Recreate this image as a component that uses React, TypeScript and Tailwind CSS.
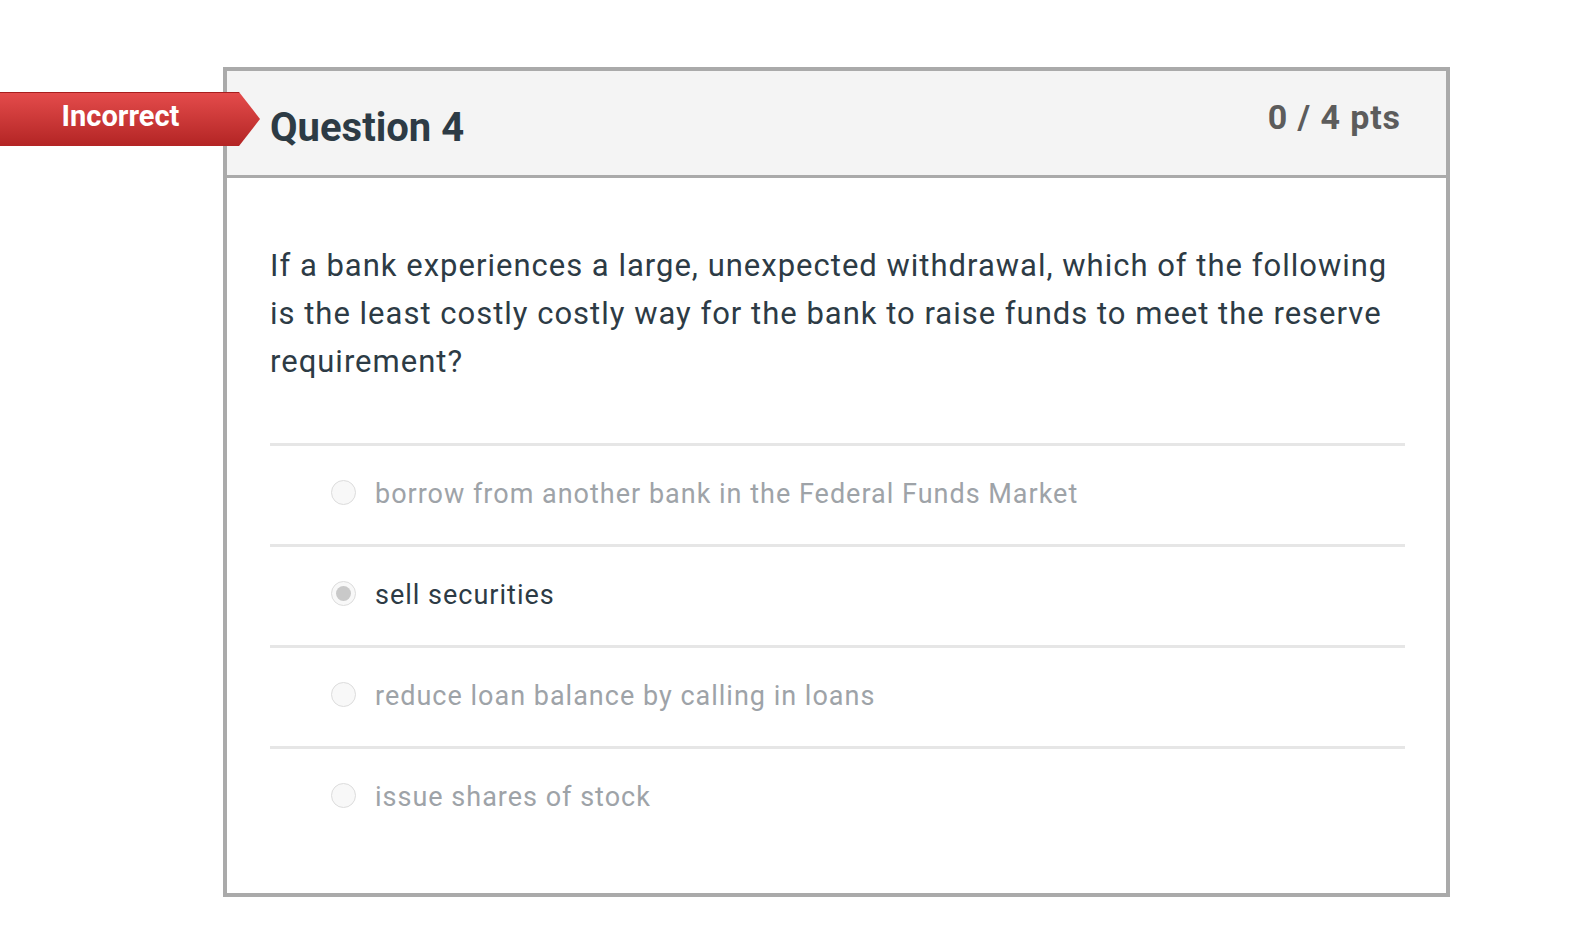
import React from 'react';

type Answer = { text: string; selected?: boolean };

const answers: Answer[] = [
  { text: 'borrow from another bank in the Federal Funds Market' },
  { text: 'sell securities', selected: true },
  { text: 'reduce loan balance by calling in loans' },
  { text: 'issue shares of stock' },
];

const Radio: React.FC<{ checked?: boolean }> = ({ checked }) => (
  <span className="flex-shrink-0 mb-[6px] w-[25px] h-[25px] rounded-full border border-[#dcdcdc] bg-[#f8f8f8] flex items-center justify-center">
    {checked && <span className="w-[15px] h-[15px] rounded-full bg-[#c9c9c9]" />}
  </span>
);

export default function App() {
  return (
    <div className="min-h-screen bg-white relative font-['Roboto','Liberation_Sans',sans-serif]">
      {/* incorrect ribbon */}
      <div className="absolute left-0 top-[92px] w-[260px] h-[54px] z-10 bg-gradient-to-b from-[#e44b4b] to-[#b32424] border-t border-[#a81e1e] [clip-path:polygon(0_0,239px_0,260px_50%,239px_100%,0_100%)]">
        <div className="w-[239px] h-full flex items-center justify-center pb-[7px] pl-[2px] text-white font-bold text-[29px] leading-none">
          Incorrect
        </div>
      </div>

      <div className="pt-[67px] pl-[223px]">
        <div className="w-[1227px] h-[830px] border-4 border-[#aaaaaa] flex flex-col">
          <div className="h-[107px] flex-shrink-0 bg-[#f4f4f4] border-b-[3px] border-[#aaaaaa] flex items-start justify-between px-[43px]">
            <h2 className="pt-[33px] text-[40px] leading-[48px] font-bold text-[#2d3b45]">Question 4</h2>
            <div className="pt-[26px] mr-[2px] text-[34px] leading-[40px] font-bold tracking-[0.9px] text-[#5c5c5c]">
              0 / 4 pts
            </div>
          </div>

          <div className="px-[43px] pt-[64px]">
            <p className="text-[31px] leading-[48px] tracking-[1px] text-[#2d3b45] whitespace-nowrap">
              If a bank experiences a large, unexpected withdrawal, which of the following
              <br />
              is the least costly costly way for the bank to raise funds to meet the reserve
              <br />
              requirement?
            </p>

            <div className="mt-[57px] mr-[-2px]">
              {answers.map((a, i) => (
                <div
                  key={i}
                  className="h-[101px] border-t-[3px] border-[#e6e6e6] flex items-center pl-[61px] gap-[19px]"
                >
                  <Radio checked={a.selected} />
                  <span
                    className={`text-[27px] leading-none tracking-[1px] pb-[2px] ${
                      a.selected ? 'text-[#2d3b45]' : 'text-[#9ea3a8]'
                    }`}
                  >
                    {a.text}
                  </span>
                </div>
              ))}
            </div>
          </div>
        </div>
      </div>
    </div>
  );
}
